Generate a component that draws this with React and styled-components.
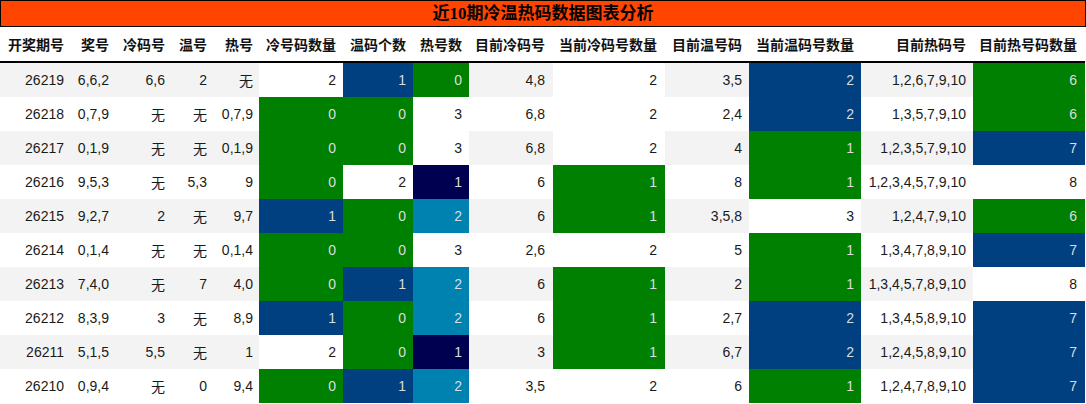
import React from 'react';
import styled, { createGlobalStyle } from 'styled-components';

const GlobalStyle = createGlobalStyle`
  body {
    margin: 0;
    background: #ffffff;
    font-family: "Liberation Sans", "Noto Sans CJK SC", sans-serif;
  }
`;

const columns = [
  { title: '开奖期号', width: 69, pad: 5 },
  { title: '奖号', width: 44, pad: 4 },
  { title: '冷码号', width: 57, pad: 5 },
  { title: '温号', width: 41, pad: 4 },
  { title: '热号', width: 48, pad: 6 },
  { title: '冷号码数量', width: 84, pad: 7 },
  { title: '温码个数', width: 70, pad: 7 },
  { title: '热号数', width: 56, pad: 7 },
  { title: '目前冷码号', width: 84, pad: 8 },
  { title: '当前冷码号数量', width: 112, pad: 8 },
  { title: '目前温号码', width: 84, pad: 7 },
  { title: '当前温码号数量', width: 112, pad: 7 },
  { title: '目前热码号', width: 112, pad: 7 },
  { title: '目前热号码数量', width: 112, pad: 8 },
];

// columns that follow the row stripe; the count columns stay white unless coloured
const striped = [0, 1, 2, 3, 4, 8, 10, 12];

// value|tone  (g green, b blue, n navy, t teal)
const rows = [
  ['26219', '6,6,2', '6,6', '2', '无', '2', '1|b', '0|g', '4,8', '2', '3,5', '2|b', '1,2,6,7,9,10', '6|g'],
  ['26218', '0,7,9', '无', '无', '0,7,9', '0|g', '0|g', '3', '6,8', '2', '2,4', '2|b', '1,3,5,7,9,10', '6|g'],
  ['26217', '0,1,9', '无', '无', '0,1,9', '0|g', '0|g', '3', '6,8', '2', '4', '1|g', '1,2,3,5,7,9,10', '7|b'],
  ['26216', '9,5,3', '无', '5,3', '9', '0|g', '2', '1|n', '6', '1|g', '8', '1|g', '1,2,3,4,5,7,9,10', '8'],
  ['26215', '9,2,7', '2', '无', '9,7', '1|b', '0|g', '2|t', '6', '1|g', '3,5,8', '3', '1,2,4,7,9,10', '6|g'],
  ['26214', '0,1,4', '无', '无', '0,1,4', '0|g', '0|g', '3', '2,6', '2', '5', '1|g', '1,3,4,7,8,9,10', '7|b'],
  ['26213', '7,4,0', '无', '7', '4,0', '0|g', '1|b', '2|t', '6', '1|g', '2', '1|g', '1,3,4,5,7,8,9,10', '8'],
  ['26212', '8,3,9', '3', '无', '8,9', '1|b', '0|g', '2|t', '6', '1|g', '2,7', '2|b', '1,3,4,5,8,9,10', '7|b'],
  ['26211', '5,1,5', '5,5', '无', '1', '2', '0|g', '1|n', '3', '1|g', '6,7', '2|b', '1,2,4,5,8,9,10', '7|b'],
  ['26210', '0,9,4', '无', '0', '9,4', '0|g', '1|b', '2|t', '3,5', '2', '6', '1|g', '1,2,4,7,8,9,10', '7|b'],
];

const tones = {
  g: '#008000',
  b: '#003f80',
  n: '#000050',
  t: '#0082b0',
};

const Page = styled.div`
  width: 1086px;
`;

const Title = styled.div`
  height: 25px;
  border: 1px solid #000000;
  background: #ff4500;
  color: #000000;
  font-family: "Liberation Serif", "Noto Sans CJK SC", serif;
  font-size: 17px;
  font-weight: 700;
  line-height: 25px;
  text-align: center;
`;

const Table = styled.table`
  width: 1085px;
  table-layout: fixed;
  border-collapse: collapse;
  border-spacing: 0;
`;

const HeadCell = styled.th`
  height: 34px;
  padding: 0 ${({ $pad }) => $pad}px 0 0;
  border-bottom: 2px solid #000000;
  color: #111111;
  font-family: "Noto Sans CJK SC", sans-serif;
  font-size: 14px;
  font-weight: 700;
  text-align: right;
  white-space: nowrap;
`;

const Cell = styled.td`
  height: 34px;
  padding: 0 ${({ $pad }) => $pad}px 0 0;
  background: ${({ $tone, $stripe }) => ($tone ? tones[$tone] : $stripe ? '#f3f3f3' : '#ffffff')};
  color: ${({ $tone }) => ($tone ? '#dcdcdc' : '#1a1a1a')};
  font-size: 14px;
  text-align: right;
  white-space: nowrap;
`;

const App = () => {
  return (
    <Page>
      <GlobalStyle />
      <Title>近10期冷温热码数据图表分析</Title>
      <Table>
        <colgroup>
          {columns.map((c) => (
            <col key={c.title} style={{ width: c.width }} />
          ))}
        </colgroup>
        <thead>
          <tr>
            {columns.map((c) => (
              <HeadCell key={c.title} $pad={c.pad}>
                {c.title}
              </HeadCell>
            ))}
          </tr>
        </thead>
        <tbody>
          {rows.map((row, r) => (
            <tr key={row[0]}>
              {row.map((cell, i) => {
                const [value, tone] = cell.split('|');
                const stripe = r % 2 === 0 && striped.includes(i);
                return (
                  <Cell key={i} $pad={columns[i].pad} $tone={tone} $stripe={stripe}>
                    {value}
                  </Cell>
                );
              })}
            </tr>
          ))}
        </tbody>
      </Table>
    </Page>
  );
};

export default App;
